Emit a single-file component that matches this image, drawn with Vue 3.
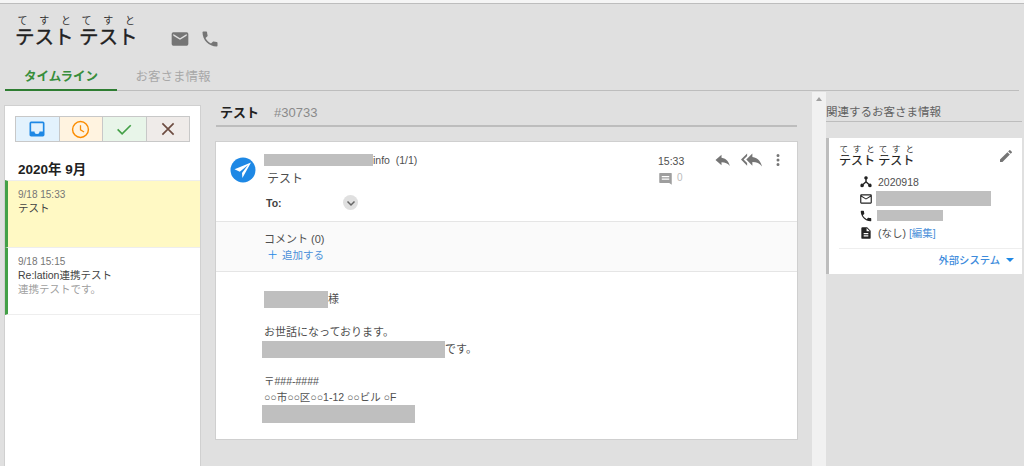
<script setup>
const filters = [
  { cls: 'f-blue', icon: 'inbox' },
  { cls: 'f-orange', icon: 'clock' },
  { cls: 'f-green', icon: 'check' },
  { cls: 'f-brown', icon: 'close' }
]
const items = [
  { time: '9/18 15:33', title: 'テスト', body: '', active: true },
  { time: '9/18 15:15', title: 'Re:lation連携テスト', body: '連携テストです。', active: false }
]
</script>

<template>
  <div class="page">
    <header class="head">
      <h1 class="name"><ruby>テスト<rt>て す と</rt></ruby> <ruby>テスト<rt>て す と</rt></ruby></h1>
      <svg class="h-mail" viewBox="0 0 24 24"><path fill="#757575" d="M20 4H4a2 2 0 0 0-2 2v12a2 2 0 0 0 2 2h16a2 2 0 0 0 2-2V6a2 2 0 0 0-2-2zm0 4-8 5-8-5V6l8 5 8-5z"/></svg>
      <svg class="h-phone" viewBox="0 0 24 24"><path fill="#757575" d="M6.6 10.8c1.4 2.8 3.8 5.1 6.6 6.6l2.2-2.2c.3-.3.7-.4 1-.2 1.1.4 2.3.6 3.6.6.6 0 1 .4 1 1V20c0 .6-.4 1-1 1C10.600 21 3 13.400 3 4c0-.6.4-1 1-1h3.500c.6 0 1 .4 1 1 0 1.300.2 2.500.6 3.600.1.300 0 .7-.2 1z"/></svg>
    </header>

    <nav class="tabs">
      <span class="tab on">タイムライン</span>
      <span class="tab">お客さま情報</span>
    </nav>

    <main class="cols">
      <aside class="left">
        <div class="filters">
          <span v-for="f in filters" :key="f.icon" class="fbtn" :class="f.cls">
            <svg v-if="f.icon === 'inbox'" viewBox="0 0 24 24" width="20" height="20"><path fill="#1e88e5" d="M19 3H5a2 2 0 0 0-2 2v14c0 1.100.9 2 2 2h14a2 2 0 0 0 2-2V5a2 2 0 0 0-2-2zm0 12h-4a3 3 0 0 1-6 0H5V5h14z"/></svg>
            <svg v-else-if="f.icon === 'clock'" viewBox="0 0 24 24" width="19" height="19"><circle cx="12" cy="12" r="10" fill="none" stroke="#fb8c00" stroke-width="1.800"/><path fill="none" stroke="#fb8c00" stroke-width="1.600" d="M12 6.500V12.500l4.500 2.600"/></svg>
            <svg v-else-if="f.icon === 'check'" viewBox="0 0 24 24" width="18" height="18"><path fill="none" stroke="#43a047" stroke-width="2.200" d="M3.500 12.500l6 6L21 7"/></svg>
            <svg v-else viewBox="0 0 24 24" width="18" height="18"><path fill="none" stroke="#6d4c41" stroke-width="2.200" d="M4.500 4.500l15 15M19.500 4.500l-15 15"/></svg>
          </span>
        </div>
        <div class="month">2020年 9月</div>
        <article v-for="it in items" :key="it.time" class="item" :class="{ active: it.active }">
          <div class="time">{{ it.time }}</div>
          <div class="ttl">{{ it.title }}</div>
          <div class="body">{{ it.body }}</div>
        </article>
      </aside>

      <section class="center">
        <div class="ticket"><b>テスト</b><span>#30733</span></div>
        <div class="card">
          <div class="mail-head">
            <svg class="send" viewBox="0 0 26 26"><circle cx="13" cy="13" r="12.500" fill="#1e88e5"/><path fill="#fff" d="M21 5.500 4.500 12.200l5.300 2.500L18 8l-6 8 .4 5z"/></svg>
            <div class="mh-main">
              <div class="from"><i class="mask m-from"></i>info&nbsp;&nbsp;(1/1)</div>
              <div class="subj">テスト</div>
              <div class="to"><b>To:</b><span class="chev"><svg viewBox="0 0 24 24" width="12" height="12"><path fill="none" stroke="#666" stroke-width="3" d="M5 9l7 7 7-7"/></svg></span></div>
            </div>
            <div class="mh-time">
              <div>15:33</div>
              <div class="cnt"><svg viewBox="0 0 24 24" width="15" height="15"><path fill="#9e9e9e" d="M21 3H3a1 1 0 0 0-1 1v14a1 1 0 0 0 1 1h15l4 3V4a1 1 0 0 0-1-1zM18 14H6v-2h12zm0-4H6V8h12z"/></svg><span>0</span></div>
            </div>
            <div class="mh-acts">
              <svg viewBox="0 0 24 24" width="18" height="18"><path fill="#757575" d="M10 9V5l-8 7 8 7v-4.100c5 0 8.500 1.600 11 5.100-1-5-4-10-11-11z"/></svg>
              <svg viewBox="0 0 24 24" width="21" height="21"><path fill="#757575" d="M7 8V5l-7 7 7 7v-3l-4-4zm6 1V5l-7 7 7 7v-4.100c5 0 8.500 1.600 11 5.100-1-5-4-10-11-11z"/></svg>
              <svg class="dots" viewBox="0 0 24 24" width="18" height="18"><path fill="#757575" d="M12 8a2 2 0 1 0 0-4 2 2 0 0 0 0 4zm0 2a2 2 0 1 0 0 4 2 2 0 0 0 0-4zm0 6a2 2 0 1 0 0 4 2 2 0 0 0 0-4z"/></svg>
            </div>
          </div>
          <div class="comment">
            <div>コメント (0)</div>
            <div class="add"><span class="plus">＋</span>追加する</div>
          </div>
          <div class="mail-body">
            <p><i class="mask m-a"></i>様</p>
            <p class="gap">お世話になっております。</p>
            <p class="shift"><i class="mask m-b"></i>です。</p>
            <p class="gap small">〒###-####</p>
            <p class="small">○○市○○区○○1-12 ○○ビル ○F</p>
            <p class="shift"><i class="mask m-c"></i></p>
          </div>
        </div>
      </section>

      <div class="scroll"><span class="arrow"></span></div>

      <aside class="right">
        <div class="r-title">関連するお客さま情報</div>
        <div class="r-card">
          <div class="r-name-row">
            <div class="r-name"><ruby>テスト<rt>て す と</rt></ruby> <ruby>テスト<rt>て す と</rt></ruby></div>
            <svg viewBox="0 0 24 24" width="16" height="16"><path fill="#757575" d="M3 17.300V21h3.700L17.800 9.900l-3.700-3.700zM20.700 7a1 1 0 0 0 0-1.400l-2.300-2.300a1 1 0 0 0-1.400 0l-1.800 1.800 3.700 3.700z"/></svg>
          </div>
          <div class="r-row">
            <svg viewBox="0 0 24 24" width="14" height="14"><path fill="#222" d="M12 2a3 3 0 0 1 1.200 5.750V11l4.300 4.100a3 3 0 1 1-1.600 1.700L12 13.200l-3.900 3.600a3 3 0 1 1-1.600-1.700l4.300-4.100V7.750A3 3 0 0 1 12 2z"/></svg>
            <span>2020918</span>
          </div>
          <div class="r-row">
            <svg viewBox="0 0 24 24" width="14" height="14"><path fill="#222" d="M20 4H4a2 2 0 0 0-2 2v12a2 2 0 0 0 2 2h16a2 2 0 0 0 2-2V6a2 2 0 0 0-2-2zm0 14H4V8l8 5 8-5zm-8-7L4 6h16z"/></svg>
            <i class="mask m-d"></i>
          </div>
          <div class="r-row">
            <svg viewBox="0 0 24 24" width="14" height="14"><path fill="#222" d="M6.600 10.800c1.400 2.800 3.800 5.100 6.600 6.600l2.200-2.200c.3-.3.7-.4 1-.2 1.100.4 2.300.6 3.600.6.600 0 1 .4 1 1V20c0 .6-.4 1-1 1C10.600 21 3 13.400 3 4c0-.6.4-1 1-1h3.500c.6 0 1 .4 1 1 0 1.300.2 2.500.6 3.600.1.300 0 .7-.2 1z"/></svg>
            <i class="mask m-e"></i>
          </div>
          <div class="r-row">
            <svg viewBox="0 0 24 24" width="14" height="14"><path fill="#222" d="M14 2H6a2 2 0 0 0-2 2v16a2 2 0 0 0 2 2h12a2 2 0 0 0 2-2V8zm2 16H8v-2h8zm0-4H8v-2h8zm-3-5V3.500L18.500 9z"/></svg>
            <span>(なし) <a>[編集]</a></span>
          </div>
          <div class="r-foot">外部システム<span class="caret"></span></div>
        </div>
      </aside>
    </main>
  </div>
</template>

<style>
html, body { margin: 0; background: #e0e0e0; overflow: hidden; }
</style>

<style scoped>
.page {
  width: 1024px;
  height: 466px;
  overflow: hidden;
  background: #e0e0e0;
  border-top: 3px solid #f5f5f5;
  box-shadow: inset 0 1px 0 #bdbdbd;
  box-sizing: border-box;
  font-family: "Liberation Sans", "Noto Sans CJK JP", sans-serif;
  color: #4f4f4f;
  font-size: 11px;
}
.mask { display: inline-block; background: #bfbfbf; }
.head { display: flex; align-items: flex-end; height: 47px; padding-left: 15px; }
.name { margin: 0; font-size: 19.500px; line-height: 26px; font-weight: 400; -webkit-text-stroke: 0.4px #212121; color: #212121; }
rt { font-size: 10px; line-height: 8px; color: #333; font-weight: 400; word-spacing: -1px; -webkit-text-stroke: 0; }
.h-mail { width: 20px; height: 20px; margin-left: 33px; margin-bottom: 1px; }
.h-phone { width: 20px; height: 20px; margin-left: 10px; margin-bottom: 1px; }
.tabs { display: flex; height: 25px; margin: 15px 5px 0; border-bottom: 1px solid #bdbdbd; box-sizing: content-box; }
.tab { width: 112px; text-align: center; font-size: 12.500px; line-height: 24px; color: #a8a8a8; }
.tab.on { color: #388e3c; font-weight: 700; border-bottom: 2px solid #2e7d32; height: 24px; margin-right: 0; }
.cols { display: flex; align-items: flex-start; margin-top: 15px; }
.left { width: 195px; height: 360px; margin-left: 5px; background: #fff; box-shadow: 0 0 0 1px #d0d0d0; }
.filters { display: flex; margin: 10px 10px 0; width: 175px; height: 26px; border: 1px solid #c8c8c8; box-sizing: border-box; }
.fbtn { flex: 1; display: flex; align-items: center; justify-content: center; border-right: 1px solid #c8c8c8; }
.fbtn:last-child { border-right: 0; }
.f-blue { background: #e3f2fd; }
.f-orange { background: #fff3e0; }
.f-green { background: #e8f5e9; }
.f-brown { background: #efebe9; }
.month { margin: 19px 0 0 13px; font-size: 13.500px; line-height: 18px; font-weight: 700; color: #212121; height: 19px; }
.item { height: 59px; border-left: 3px solid #43a047; border-bottom: 1px solid #eee; padding: 7px 0 0 10px; box-sizing: content-box; font-size: 10.500px; line-height: 14px; }
.item.active { background: #fff9c4; border-top: 1px solid #eee; }
.time { color: #757575; font-size: 10px; }
.ttl { margin-top: -1px; color: #424242; }
.body { color: #a0a0a0; }
.center { width: 581px; margin-left: 16px; }
.ticket { height: 21px; padding-left: 4px; border-bottom: 2px solid #bdbdbd; box-sizing: border-box; display: flex; align-items: flex-start; }
.ticket b { font-size: 13px; color: #212121; line-height: 14px; }
.ticket span { margin-left: 15px; font-size: 13px; color: #8a8a8a; line-height: 14px; }
.card { margin-top: 15px; background: #fff; height: 297px; box-shadow: 0 0 0 1px #cfcfcf; }
.mail-head { display: flex; height: 79px; border-bottom: 1px solid #e5e5e5; position: relative; }
.send { width: 26px; height: 26px; margin: 15px 0 0 14px; }
.mh-main { margin-left: 8px; width: 384px; }
.from { margin-top: 12px; display: flex; align-items: center; font-size: 10.500px; height: 12px; }
.m-from { width: 109px; height: 12px; }
.subj { margin: 5px 0 0 3px; font-size: 12px; line-height: 16px; }
.to { display: flex; align-items: center; margin-top: 8px; }
.to b { font-size: 10.500px; width: 77px; padding-left: 2px; color: #424242; }
.chev { display: flex; align-items: center; justify-content: center; width: 15px; height: 15px; border-radius: 50%; background: #e0e0e0; }
.mh-time { position: absolute; left: 442px; top: 13px; font-size: 10.500px; line-height: 13px; }
.cnt { display: flex; align-items: center; gap: 4px; color: #bbb; font-size: 10px; margin-top: 0; }
.cnt svg { margin-top: 3px; }
.mh-acts { position: absolute; left: 498px; top: 7px; display: flex; align-items: center; gap: 9px; }
.dots { margin-left: -2px; }
.comment { height: 50px; background: #fafafa; border-bottom: 1px solid #e5e5e5; padding: 10px 0 0 48px; box-sizing: border-box; font-size: 11px; line-height: 15px; }
.add { color: #4a90d9; font-size: 10.500px; line-height: 16px; }
.plus { color: #1e88e5; margin-right: 4px; margin-left: 3px; font-size: 11px; }
.mail-body { padding: 19px 0 0 48px; font-size: 11px; line-height: 17px; }
.mail-body p { margin: 0; display: flex; align-items: center; height: 17px; }
.mail-body .gap { margin-top: 16px; }
.mail-body .gap.small { margin-top: 15px; }
.mail-body .small { font-size: 10.500px; height: 16px; }
.shift { margin-left: -2px !important; }
.m-a { width: 64px; height: 17px; }
.m-b { width: 183px; height: 17px; }
.m-c { width: 153px; height: 18px; }
.scroll { width: 14px; height: 374px; margin: -14px 0 0 15px; background: #f1f1f1; position: relative; }
.arrow { position: absolute; left: 4px; top: 5px; border: 3px solid transparent; border-bottom: 4px solid #a0a0a0; border-top: 0; }
.right { width: 196px; }
.r-title { margin-top: -2px; height: 17px; border-bottom: 1px solid #bdbdbd; font-size: 11.500px; line-height: 16px; color: #616161; }
.r-card { margin-top: 16px; height: 136px; background: #fff; border-left: 3px solid #bdbdbd; box-sizing: border-box; padding-left: 10px; }
.r-name-row { display: flex; justify-content: space-between; align-items: center; padding: 6px 8px 0 0; height: 24px; }
.r-name { font-size: 12px; line-height: 13px; color: #212121; font-weight: 400; -webkit-text-stroke: 0.2px #212121; }
.r-name rt { font-size: 8.500px; line-height: 6px; word-spacing: 1px; }
.r-row { display: flex; align-items: center; height: 17px; margin-left: 20px; gap: 5px; font-size: 10.500px; }
.r-name-row + .r-row { margin-top: 5px; }
a { color: #4a90d9; }
.m-d { width: 115px; height: 15px; margin-left: -2px; }
.m-e { width: 66px; height: 11px; margin-left: -1px; }
.r-foot { margin: 7px 0 0 0; border-top: 1px solid #eee; text-align: right; padding: 5px 8px 0 0; color: #3d8bdc; font-size: 10.300px; font-weight: 500; line-height: 14px; }
.caret { display: inline-block; margin-left: 6px; vertical-align: 2px; border: 4px solid transparent; border-top: 4px solid #1e88e5; border-bottom: 0; }
</style>
